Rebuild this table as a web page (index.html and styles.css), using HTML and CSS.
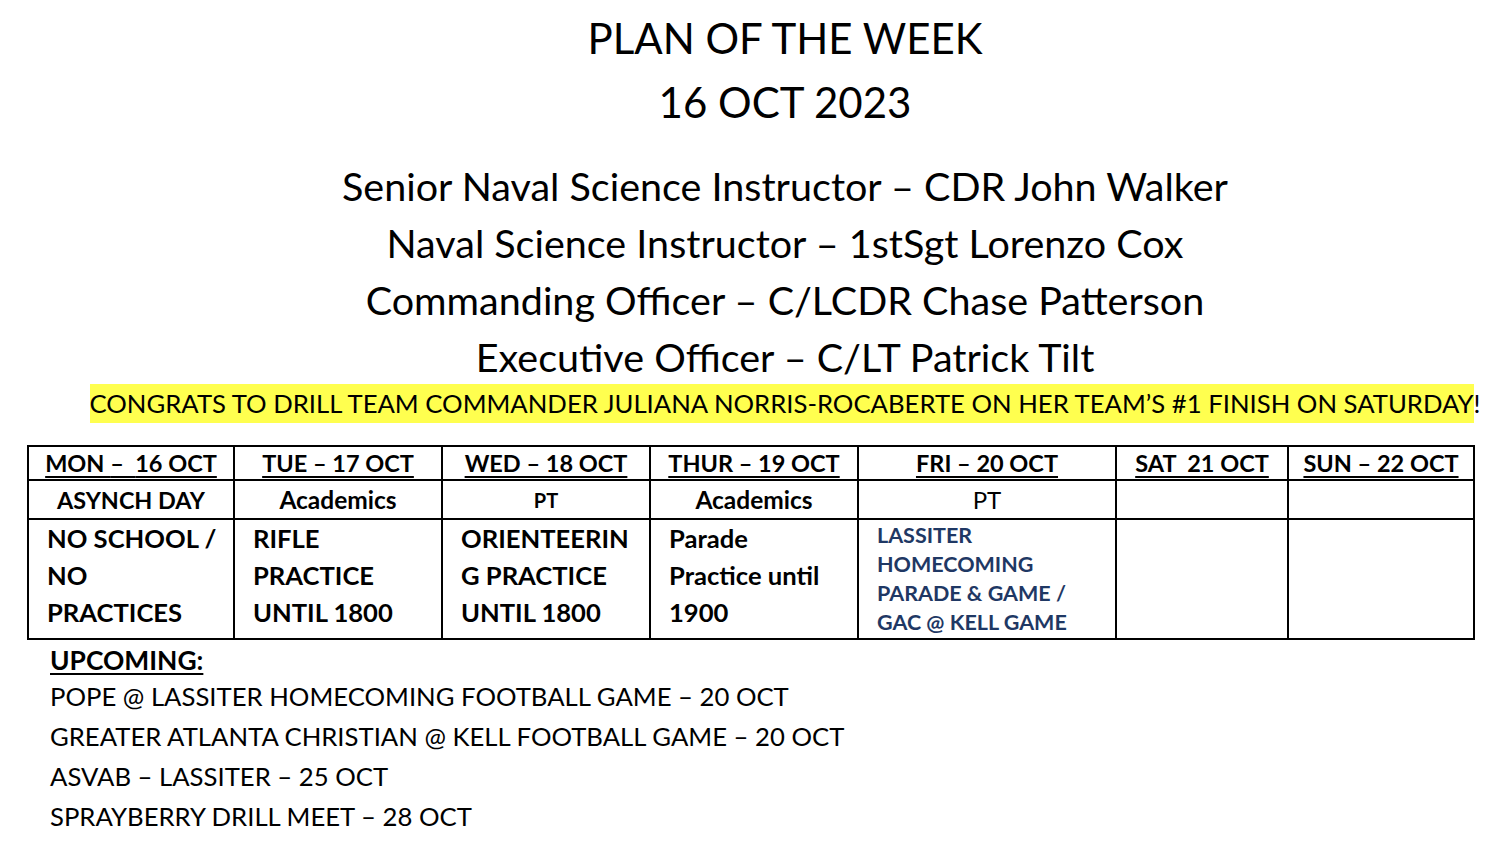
FILE: index.html
```html
<!DOCTYPE html>
<html>
<head>
<meta charset="utf-8">
<link rel="stylesheet" href="styles.css">
</head>
<body>
<header class="head">
  <h1 class="title">PLAN OF THE WEEK<br>16 OCT 2023</h1>
  <div class="staff">
    <p>Senior Naval Science Instructor – CDR John Walker</p>
    <p>Naval Science Instructor – 1stSgt Lorenzo Cox</p>
    <p>Commanding Officer – C/LCDR Chase Patterson</p>
    <p>Executive Officer – C/LT Patrick Tilt</p>
  </div>
  <p class="congrats"><mark class="hl">CONGRATS TO DRILL TEAM COMMANDER JULIANA NORRIS-ROCABERTE ON HER TEAM’S #1 FINISH ON SATURDAY</mark>!</p>
</header>
<table class="week">
  <colgroup>
    <col class="c1"><col class="c2"><col class="c3"><col class="c4"><col class="c5"><col class="c6"><col class="c7">
  </colgroup>
  <tr class="days">
    <th><span class="u">MON <span class="blue">–&nbsp;&nbsp;</span>16 OCT</span></th>
    <th><span class="u">TUE – 17 OCT</span></th>
    <th><span class="u">WED – 18 OCT</span></th>
    <th><span class="u">THUR – 19 OCT</span></th>
    <th><span class="u">FRI – 20 OCT</span></th>
    <th><span class="u">SAT&nbsp;&nbsp;21 OCT</span></th>
    <th><span class="u">SUN – 22 OCT</span></th>
  </tr>
  <tr class="types">
    <td class="bold">ASYNCH DAY</td>
    <td class="bold lc">Academics</td>
    <td class="bold small">PT</td>
    <td class="bold lc">Academics</td>
    <td class="reg">PT</td>
    <td></td>
    <td></td>
  </tr>
  <tr class="acts">
    <td>NO SCHOOL /<br>NO<br>PRACTICES</td>
    <td>RIFLE<br>PRACTICE<br>UNTIL 1800</td>
    <td>ORIENTEERIN<br>G PRACTICE<br>UNTIL 1800</td>
    <td>Parade<br>Practice until<br>1900</td>
    <td class="navy">LASSITER<br>HOMECOMING<br>PARADE &amp; GAME /<br>GAC @ KELL GAME</td>
    <td></td>
    <td></td>
  </tr>
</table>
<section class="upcoming">
  <h2 class="up-title">UPCOMING:</h2>
  <p>POPE @ LASSITER HOMECOMING FOOTBALL GAME – 20 OCT</p>
  <p>GREATER ATLANTA CHRISTIAN @ KELL FOOTBALL GAME – 20 OCT</p>
  <p>ASVAB – LASSITER – 25 OCT</p>
  <p>SPRAYBERRY DRILL MEET – 28 OCT</p>
</section>
</body>
</html>
```

FILE: styles.css
```css
html, body {
  margin: 0;
  padding: 0;
  background: #fff;
  color: #000;
  font-family: "Lato", "Liberation Sans", sans-serif;
}
p, h1, h2 { margin: 0; }

.head {
  padding-left: 64px;
  text-align: center;
}
.title {
  font-weight: 400;
  font-size: 42px;
  line-height: 64px;
  padding-top: 6px;
}
.staff {
  margin-top: 23px;
  font-size: 39.5px;
  line-height: 57px;
}
.congrats {
  margin-top: -1px;
  font-size: 25.7px;
  line-height: 38px;
}
.hl {
  background: #ffff4f;
  color: #000;
  padding: 4px 0 5px;
}

.week {
  margin: 23px 0 0 27px;
  border-collapse: collapse;
  table-layout: fixed;
  width: 1446px;
}
.c1 { width: 206px; }
.c2 { width: 208px; }
.c3 { width: 208px; }
.c4 { width: 208px; }
.c5 { width: 258px; }
.c6 { width: 172px; }
.c7 { width: 186px; }
.week th, .week td {
  border: 2px solid #000;
  padding: 0;
}
.days th {
  height: 32px;
  font-size: 23.5px;
  font-weight: 700;
  text-align: center;
  line-height: 30px;
}
.u {
  text-decoration: underline;
  text-decoration-thickness: 2px;
  text-underline-offset: 4px;
}
.blue { text-decoration-color: #2f5fd0; }
.types td {
  height: 37px;
  text-align: center;
}
.bold { font-weight: 700; font-size: 23.4px; }
.bold.lc { font-size: 24.5px; }
.bold.small { font-size: 20px; }
.reg { font-weight: 400; font-size: 24px; }
.acts td {
  height: 117px;
  vertical-align: top;
  padding: 0 6px 0 18px;
  font-weight: 700;
  font-size: 25.6px;
  line-height: 37px;
}
.acts td.navy {
  color: #1f3864;
  font-size: 21.5px;
  line-height: 29px;
  padding-top: 1px;
}

.upcoming {
  padding: 4px 0 0 50px;
  font-size: 25.7px;
  line-height: 40px;
}
.up-title {
  font-size: 26.4px;
  font-weight: 700;
  line-height: 32px;
  text-decoration: underline;
  text-decoration-thickness: 2px;
  text-underline-offset: 3px;
}
```
